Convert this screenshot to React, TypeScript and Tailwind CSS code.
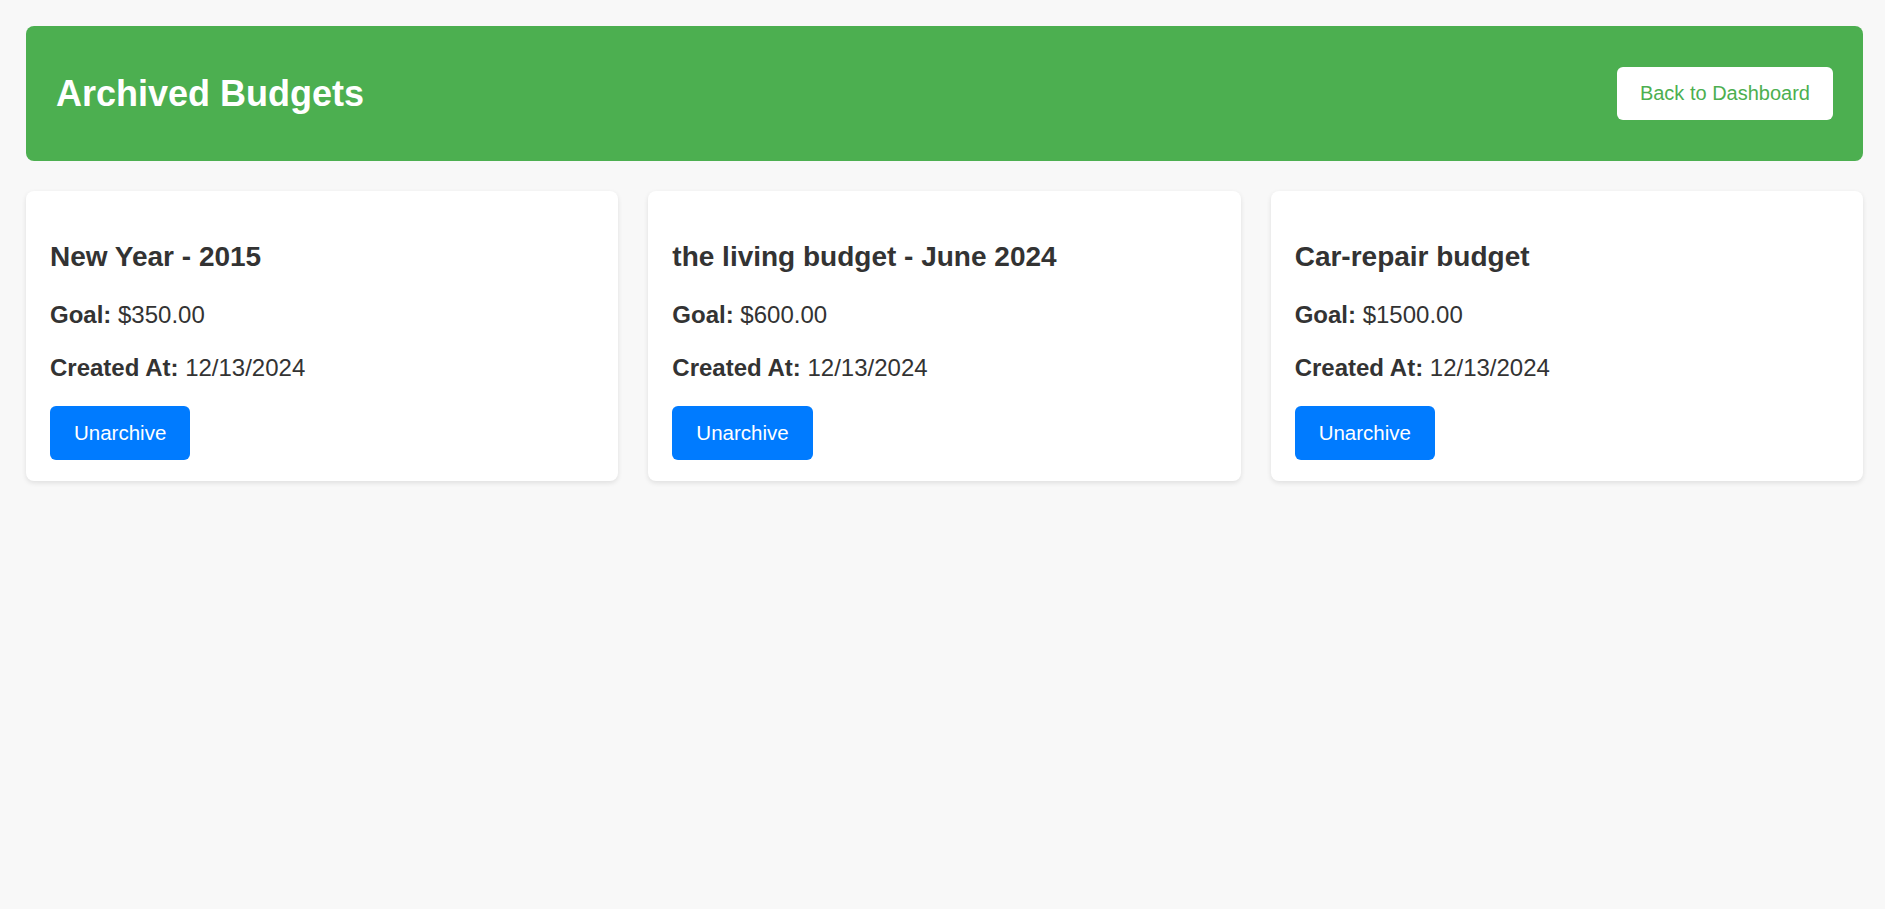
import React from 'react';

interface Budget {
  id: number;
  name: string;
  goal: string;
  createdAt: string;
}

const budgets: Budget[] = [
  { id: 1, name: 'New Year - 2015', goal: '$350.00', createdAt: '12/13/2024' },
  { id: 2, name: 'the living budget - June 2024', goal: '$600.00', createdAt: '12/13/2024' },
  { id: 3, name: 'Car-repair budget', goal: '$1500.00', createdAt: '12/13/2024' },
];

const BudgetCard: React.FC<{ budget: Budget }> = ({ budget }) => {
  return (
    <div className="bg-white rounded-lg shadow-[0_2px_5px_rgba(0,0,0,0.1)] px-6 pt-[50px] pb-[21px] flex flex-col items-start">
      <h3 className="text-[28px] leading-[32px] font-bold text-[#333]">{budget.name}</h3>
      <p className="mt-[28px] text-[24px] leading-[28px] text-[#333]">
        <strong className="font-bold">Goal:</strong> {budget.goal}
      </p>
      <p className="mt-[25px] text-[24px] leading-[28px] text-[#333]">
        <strong className="font-bold">Created At:</strong> {budget.createdAt}
      </p>
      <button className="mt-6 bg-[#007bff] text-white text-[20.5px] leading-[24px] px-6 py-[15px] rounded-md">
        Unarchive
      </button>
    </div>
  );
};

export default function App() {
  return (
    <div
      className="min-h-screen bg-[#f8f8f8] pt-[26px] pl-[26px] pr-[22px] pb-6"
      style={{ fontFamily: '"Liberation Sans", Arial, sans-serif' }}
    >
      <header className="h-[135px] bg-[#4caf50] rounded-lg px-[30px] flex items-center justify-between">
        <h1 className="text-[36px] leading-[42px] font-bold text-white">Archived Budgets</h1>
        <button className="bg-white text-[#4caf50] text-[20px] leading-[23px] px-[23px] py-[15px] rounded-md">
          Back to Dashboard
        </button>
      </header>

      <div className="mt-[30px] grid grid-cols-3 gap-[30px] items-start">
        {budgets.map((b) => (
          <BudgetCard key={b.id} budget={b} />
        ))}
      </div>
    </div>
  );
}
